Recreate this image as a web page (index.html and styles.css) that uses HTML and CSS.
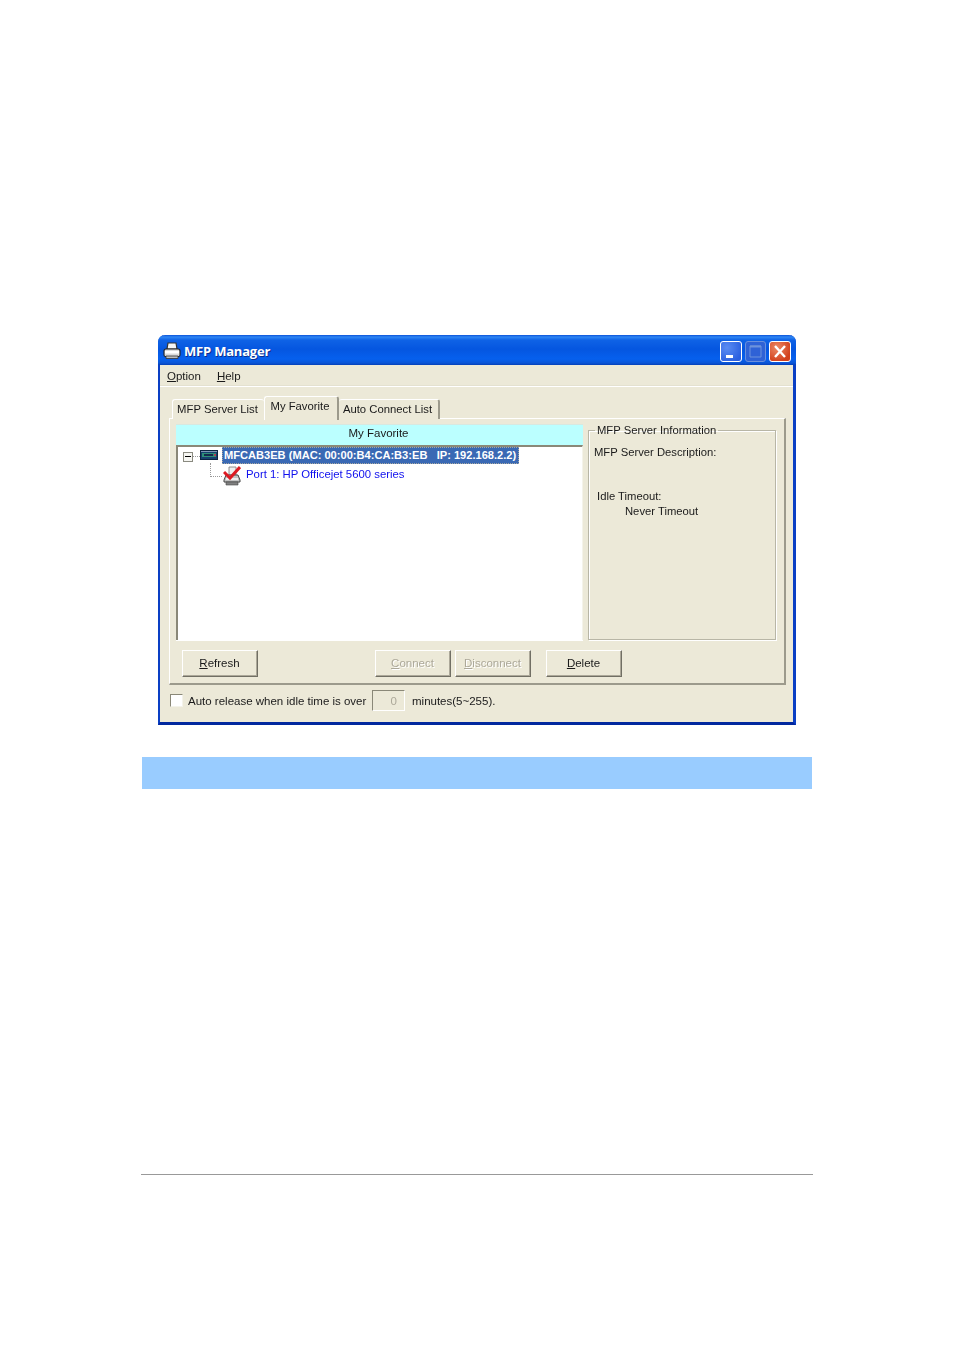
FILE: index.html
```html
<!DOCTYPE html>
<html lang="en">
<head>
<meta charset="utf-8">
<title>MFP Manager</title>
<link rel="stylesheet" href="styles.css">
</head>
<body>
<main class="page">
  <section class="window">
    <header class="titlebar">
      <svg class="app-icon" viewBox="0 0 18 18" width="18" height="18">
        <path d="M5 1h8l1 6H4z" fill="#f6f6f6" stroke="#333" stroke-width="1.2"/>
        <path d="M3 7h12q2 0 2 2v4q0 1.500-1.500 1.500h-13Q1 14.500 1 13V9q0-2 2-2z" fill="#dcdcdc" stroke="#222" stroke-width="1.100"/>
        <path d="M2 9h14v2.500H2z" fill="#fff"/>
        <path d="M3 14h12v2.500H3z" fill="#bdbdbd" stroke="#333" stroke-width=".8"/>
      </svg>
      <h1 class="title">MFP Manager</h1>
      <div class="win-buttons">
        <span class="win-btn win-min"><svg viewBox="0 0 22 21" width="22" height="21"><rect x="6" y="14" width="7" height="3" fill="#fff"/></svg></span>
        <span class="win-btn win-max"><svg viewBox="0 0 21 21" width="21" height="21"><path d="M5 5h11v11H5z" fill="none" stroke="#6d92dc" stroke-width="1"/><path d="M5 5.500h11" stroke="#6d92dc" stroke-width="2"/></svg></span>
        <span class="win-btn win-close"><svg viewBox="0 0 22 21" width="22" height="21"><path d="M6 5l10 11M16 5L6 16" stroke="#fff" stroke-width="2.400" fill="none"/></svg></span>
      </div>
    </header>
    <nav class="menubar">
      <span class="menu-item"><u>O</u>ption</span>
      <span class="menu-item"><u>H</u>elp</span>
    </nav>
    <div class="tabs">
      <span class="tab tab-first">MFP Server List</span>
      <span class="tab tab-active">My Favorite</span>
      <span class="tab tab-last">Auto Connect List</span>
    </div>
    <div class="panel">
      <div class="panel-grid">
        <div class="tree-wrap">
          <div class="tree-head">My Favorite</div>
          <div class="tree">
            <div class="node node-server">
              <span class="expander"></span>
              <span class="dots-h"></span>
              <svg class="server-icon" viewBox="0 0 18 10" width="18" height="10">
                <rect x=".5" y=".5" width="17" height="9" fill="#16406e" stroke="#0b2440"/>
                <rect x="2" y="3" width="14" height="4" fill="#2d8f78"/>
                <rect x="4" y="4" width="9" height="2" fill="#142a4c"/>
                <rect x="1" y="1" width="16" height="1" fill="#7f97b8"/>
                <rect x="14" y="4" width="2" height="2" fill="#b04050"/>
              </svg>
              <span class="server-label">MFCAB3EB (MAC: 00:00:B4:CA:B3:EB&nbsp;&nbsp; IP: 192.168.2.2)</span>
            </div>
            <div class="node node-port">
              <span class="elbow"></span>
              <svg class="port-icon" viewBox="0 0 18 20" width="18" height="20">
                <path d="M6 1h7v8H6z" fill="#eee" stroke="#777" stroke-width=".8"/>
                <path d="M3 9h12l2 5v2H1v-2z" fill="#c4c4c4" stroke="#444" stroke-width="1"/>
                <path d="M3 12h12v2H3z" fill="#eee"/>
                <path d="M3 16h12v3H3z" fill="#808080" stroke="#444" stroke-width=".6"/>
                <path d="M1 6l6 6L17 1" stroke="#dd1a22" stroke-width="3" fill="none"/>
              </svg>
              <span class="port-label">Port 1: HP Officejet 5600 series</span>
            </div>
          </div>
        </div>
        <fieldset class="info">
          <legend class="info-legend">MFP Server Information</legend>
          <p class="info-desc">MFP Server Description:</p>
          <p class="info-idle">Idle Timeout:</p>
          <p class="info-never">Never Timeout</p>
        </fieldset>
      </div>
      <div class="actions">
        <button class="btn" type="button"><u>R</u>efresh</button>
        <button class="btn btn-connect" type="button" disabled><u>C</u>onnect</button>
        <button class="btn btn-disconnect" type="button" disabled><u>D</u>isconnect</button>
        <button class="btn btn-delete" type="button"><u>D</u>elete</button>
      </div>
    </div>
    <div class="release">
      <span class="check"></span>
      <span class="release-a">Auto release when idle time is over</span>
      <span class="minutes-input">0</span>
      <span class="release-b">minutes(5~255).</span>
    </div>
  </section>
  <div class="band"></div>
  <div class="rule"></div>
</main>
</body>
</html>
```
FILE: styles.css
```css
* { box-sizing: border-box; }
html, body { margin: 0; padding: 0; background: #fff; }
body { font-family: "Liberation Sans", Arial, sans-serif; font-size: 11.5px; color: #1a1a1a; }
.page { width: 954px; height: 1350px; padding-top: 335px; overflow: hidden; }

.window {
  width: 638px; height: 390px; margin-left: 158px;
  display: flex; flex-direction: column;
  background: #ece9d8;
  border: solid #0a3fc4; border-width: 0 3px 3px 2px;
  border-radius: 7px 7px 0 0;
  border-bottom-color: #02289e;
  filter: blur(.4px);
}
.titlebar {
  height: 30px; margin: 0 -3px 0 -2px; padding: 0 5px 0 5px;
  display: flex; align-items: center;
  border-radius: 7px 7px 0 0;
  background: linear-gradient(#0a52d8 0, #2f86f4 2px, #0f63e6 5px, #0556e0 14px, #0660ee 24px, #0a55d6 28px, #043fb8 30px);
}
.app-icon { flex: none; margin-top: 1px; }
.title {
  margin: 2px 0 0 3px; flex: 1;
  font-family: "Open Sans", sans-serif; font-size: 13px; font-weight: 700; color: #fff;
  letter-spacing: -.2px;
  text-shadow: 1px 1px 0 #0b2f90;
}
.win-buttons { display: flex; gap: 3px; margin-top: 2px; }
.win-btn { display: block; height: 21px; border: 1px solid #fff; border-radius: 3px; overflow: hidden; }
.win-btn svg { display: block; margin: -1px; }
.win-min { width: 22px; background: radial-gradient(circle at 30% 30%, #5a8cf2, #2a5fe0 80%); }
.win-max { width: 21px; background: #2f62d6; border-color: #6a90dc; }
.win-close { width: 22px; background: radial-gradient(circle at 35% 30%, #ec8a66, #d2401c 75%); }

.menubar {
  height: 22px; padding: 0 0 0 7px;
  display: flex; gap: 16px; align-items: center;
  border-bottom: 1px solid #fff; box-shadow: inset 0 -1px 0 #e4e1d0;
}
.tabs { display: flex; height: 24px; margin-top: 8px; padding-left: 12px; align-items: flex-end; position: relative; z-index: 1; margin-bottom: -1px; }
.tab {
  display: flex; align-items: center; justify-content: center;
  height: 20px; padding: 0 2px 2px 0;
  background: #ece9d8;
  border: 1px solid #fff; border-bottom: 0; border-right: 2px solid #9c9a8c;
  border-radius: 3px 3px 0 0;
  font-size: 11.3px;
}
.tab-first { width: 92px; border-right: 0; }
.tab-active { width: 75px; height: 24px; padding-bottom: 5px; margin-bottom: -1px; }
.tab-last { width: 101px; border-left: 0; }

.panel {
  width: 617px; height: 267px; margin-left: 9px; padding: 5px 0 0 6px;
  border: 1px solid #fff; border-right: 2px solid #9c9a8c; border-bottom: 2px solid #9c9a8c;
}
.panel-grid { display: flex; gap: 5px; height: 216px; }
.tree-wrap { width: 407px; display: flex; flex-direction: column; }
.tree-head {
  height: 21px; padding-right: 2px; text-align: center; line-height: 17px;
  background: #bbffff; border-top: 1px solid #d8e8e0;
}
.tree {
  flex: 1;
  background: #fff;
  border: solid #8a8878; border-width: 2px 1px 0 2px;
  border-right-color: #f4f3ea;
  box-shadow: 0 1px 0 #fff;
}
.node { display: flex; align-items: center; }
.node-server { height: 17px; padding-left: 5px; }
.expander {
  flex: none; width: 10px; height: 10px; margin-top: 2px;
  border: 1px solid #8a8a80; background: linear-gradient(#000,#000) center / 6px 1px no-repeat #f6f6f2;
}
.dots-h { flex: none; width: 7px; border-top: 1px dotted #999; margin-top: 2px; }
.server-icon { flex: none; margin-top: -1px; }
.server-label {
  flex: none; margin-left: 4px; width: 297px; height: 17px; padding-left: 2px; line-height: 16px;
  background: #3a69b4; color: #fff; font-weight: 700; font-size: 11.1px; white-space: nowrap; outline: 1px dotted #a8a8a0; outline-offset: -1px;
}
.node-port { height: 22px; padding-left: 32px; }
.elbow { flex: none; width: 12px; height: 14px; margin-top: -10px; border: dotted #999; border-width: 0 0 1px 1px; }
.port-icon { flex: none; margin-left: 1px; margin-top: 1px; }
.port-label { margin-left: 5px; color: #1010ee; margin-top: -2px; font-size: 11.35px; }

.info {
  width: 188px; height: 216px; margin: 0; padding: 9px 0 0 5px; min-width: 0;
  border: 1px solid #b8b6a6; box-shadow: 1px 1px 0 #fff, inset 1px 1px 0 #fff;
  font-size: 11.25px;
}
.info-legend { margin-left: 1px; padding: 0 2px; line-height: 12px; }
.info p { margin: 0; line-height: 14px; }
.info-idle { margin-top: 30px !important; padding-left: 3px; }
.info-never { margin-top: 1px !important; padding-left: 31px; }

.actions { display: flex; height: 27px; margin-top: 10px; padding-left: 6px; }
.btn {
  width: 76px; height: 27px; padding: 0 1px 2px 0; margin: 0;
  font: inherit; color: inherit; background: #ece9d8;
  border: 1px solid; border-color: #fff #716f64 #716f64 #fff; box-shadow: inset -1px -1px 0 #aca899;
}
.btn:disabled { color: #aca899; text-shadow: 1px 1px 0 #fff; }
.btn-connect { margin-left: 117px; }
.btn-disconnect { margin-left: 4px; }
.btn-delete { margin-left: 15px; }

.release { display: flex; align-items: center; height: 21px; margin-top: 5px; padding-left: 10px; }
.check { flex: none; width: 13px; height: 13px; background: #fff; border: 1px solid; border-color: #8a8878 #f4f3ea #f4f3ea #8a8878; }
.release-a { margin-left: 5px; width: 184px; white-space: nowrap; }
.minutes-input {
  flex: none; width: 33px; height: 21px; padding-right: 7px; line-height: 20px; text-align: right; color: #aca899;
  border: 1px solid; border-color: #8a8878 #fff #fff #8a8878;
}
.release-b { margin-left: 7px; }

.band { width: 670px; height: 32px; margin: 32px 0 0 142px; background: #99ccff; }
.rule { width: 672px; height: 1px; margin: 385px 0 0 141px; background: #999; }
```
